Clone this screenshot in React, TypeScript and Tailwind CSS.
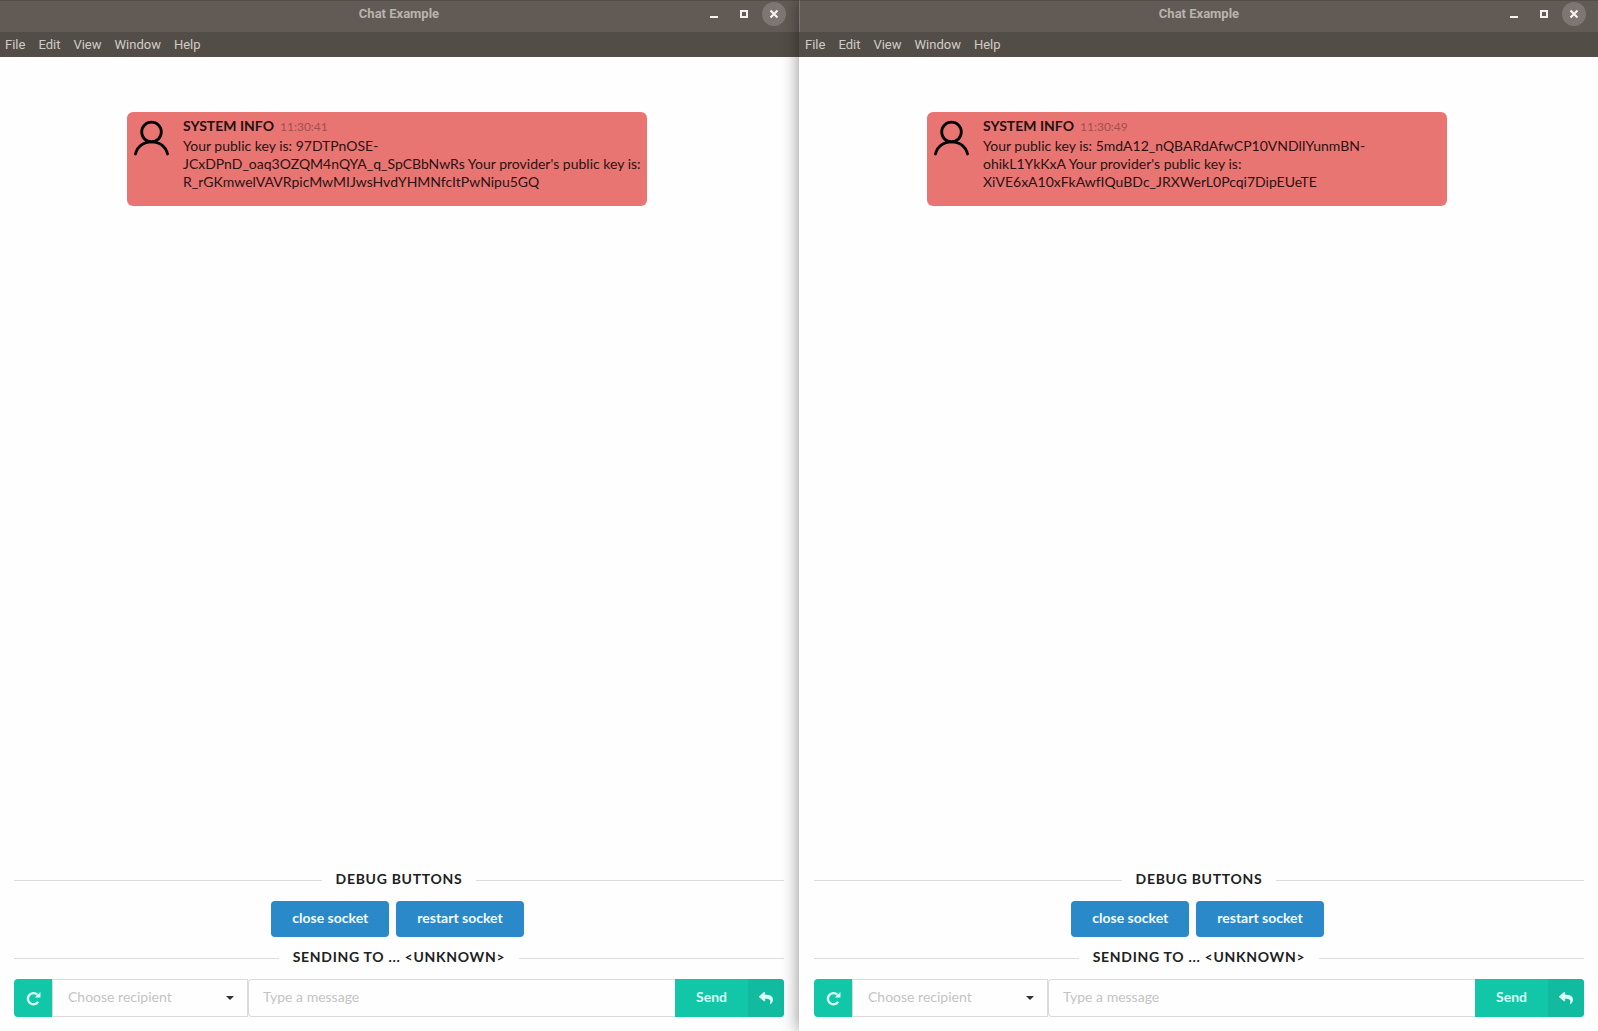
import { FaReply } from "react-icons/fa";

type Chat = { time: string; message: string };

const chats: Chat[] = [
  {
    time: "11:30:41",
    message:
      "Your public key is: 97DTPnOSE-JCxDPnD_oaq3OZQM4nQYA_q_SpCBbNwRs Your provider's public key is: R_rGKmwelVAVRpicMwMIJwsHvdYHMNfcItPwNipu5GQ",
  },
  {
    time: "11:30:49",
    message:
      "Your public key is: 5mdA12_nQBARdAfwCP10VNDlIYunmBN-ohikL1YkKxA Your provider's public key is: XiVE6xA10xFkAwfIQuBDc_JRXWerL0Pcqi7DipEUeTE",
  },
];

const menus = ["File", "Edit", "View", "Window", "Help"];

function TitleBar({ edge }: { edge: string }) {
  return (
    <header
      className={`grid h-8 grid-cols-[1fr_auto_1fr] items-start border-t border-t-[#534d47] bg-[#625a55] font-[Roboto,sans-serif] ${edge}`}
    >
      <span />
      <h1 className="pt-1 text-[13px] leading-[18px] font-bold text-[#b8b3ae]">Chat Example</h1>
      <div className="flex items-center justify-end gap-[6px] pt-px pr-3">
        <button type="button" aria-label="Minimize" className="flex size-6 items-center justify-center">
          <svg viewBox="0 0 24 24" className="size-6" fill="#f4f2f0">
            <path d="M8 14h8v2H8z" />
          </svg>
        </button>
        <button type="button" aria-label="Maximize" className="flex size-6 items-center justify-center">
          <svg viewBox="0 0 24 24" className="size-6" fill="none" stroke="#f4f2f0" strokeWidth="2">
            <path d="M9 9h6v6H9z" />
          </svg>
        </button>
        <button
          type="button"
          aria-label="Close"
          className="flex size-6 items-center justify-center rounded-full bg-[#7d7672]"
        >
          <svg viewBox="0 0 24 24" className="size-6" fill="none" stroke="#f4f2f0" strokeWidth="2.2">
            <path d="M8.5 8.5l7 7M15.5 8.5l-7 7" />
          </svg>
        </button>
      </div>
    </header>
  );
}

function Divider({ children }: { children: string }) {
  return (
    <h2 className="flex items-center gap-[14px] text-[14px] leading-5 font-bold tracking-wider text-[#212121] uppercase before:mt-[2px] before:h-px before:flex-1 before:bg-[#dcdcdc] after:mt-[2px] after:h-px after:flex-1 after:bg-[#dcdcdc]">
      {children}
    </h2>
  );
}

function ChatWindow({ chat, right }: { chat: Chat; right: boolean }) {
  return (
    <section
      className={
        right
          ? "relative z-10 flex flex-col bg-[#fefefe] shadow-[0_0_16px_rgba(0,0,0,0.45)]"
          : "flex flex-col bg-[#fefefe]"
      }
    >
      <TitleBar edge={right ? "border-l border-l-[#7d7570]" : "pr-px"} />
      <nav
        className={`flex h-[25px] items-center gap-[13px] bg-[#534d47] pr-1 font-[Roboto,sans-serif] text-[13px] leading-5 text-[#cfccc8] ${right ? "pl-[6px]" : "pl-[5px]"}`}
      >
        {menus.map((m) => (
          <button key={m} type="button">
            {m}
          </button>
        ))}
      </nav>
      <main className={`flex flex-1 flex-col pb-[14px] ${right ? "pr-[14px] pl-[15px]" : "pr-[15px] pl-[14px]"}`}>
        <article className="mt-[55px] ml-[113px] flex h-[94px] w-[520px] max-w-full gap-[14px] rounded-md bg-[#e97573] pt-[5px] pl-[7px]">
          <svg
            viewBox="0 0 35 36"
            className="mt-[3px] h-9 w-[35px] shrink-0"
            fill="none"
            stroke="#000"
            strokeWidth="2.8"
            strokeLinecap="round"
          >
            <circle cx="17.5" cy="12" r="9.8" />
            <path d="M1.5 34C3 26.5 9.500 21.800 17.500 21.800S32 26.5 33.500 34" />
          </svg>
          <div className="min-w-0 flex-1">
            <div className="flex items-baseline gap-[6px] leading-[18px]">
              <h3 className="text-[14px] font-bold text-[#241010]">SYSTEM INFO</h3>
              <time className="text-[12px] text-[#a44f4f]">{chat.time}</time>
            </div>
            <p className="mt-px text-[14px] leading-[18px] text-[#2a1212]">{chat.message}</p>
          </div>
        </article>
        <div className="mt-auto">
          <Divider>Debug buttons</Divider>
          <div className="mt-3 flex justify-center gap-[7px] pr-[3px]">
            <button
              type="button"
              className="h-9 rounded bg-[#2a89c9] px-[21px] pb-1 text-[14px] font-bold text-[#f0fbff]"
            >
              close socket
            </button>
            <button
              type="button"
              className="h-9 rounded bg-[#2a89c9] px-[21px] pb-1 text-[14px] font-bold text-[#f0fbff]"
            >
              restart socket
            </button>
          </div>
          <div className="mt-[10px]">
            <Divider>{"Sending to ... <unknown>"}</Divider>
          </div>
          <form className="mt-3 flex h-[38px]" onSubmit={(e) => e.preventDefault()}>
            <button
              type="button"
              aria-label="Refresh recipients"
              className="flex w-[38px] items-center justify-center rounded-l bg-[#12c6a8] pt-px text-[#dcfff8]"
            >
              <svg viewBox="0 0 14 14" className="size-[15px]" fill="none">
                <path d="M11.300 10.100A5.200 5.200 0 1 1 10.600 3.400" stroke="currentColor" strokeWidth="2.200" />
                <path d="M13.500 0.800V6H8.300z" fill="currentColor" />
              </svg>
            </button>
            <div className="relative w-[196px]">
              <select
                aria-label="Recipient"
                defaultValue=""
                className="h-full w-full appearance-none border border-[#dadada] bg-transparent pb-1 pl-[15px] text-[14px] text-[#c4c4c4]"
              >
                <option value="">Choose recipient</option>
              </select>
              <svg viewBox="0 0 8 4" className="pointer-events-none absolute top-[17px] right-[14px] h-1 w-2" fill="#333">
                <path d="M0 0h8L4 4z" />
              </svg>
            </div>
            <input
              aria-label="Message"
              type="text"
              placeholder="Type a message"
              className="min-w-0 flex-1 rounded-l border border-r-0 border-[#dadada] bg-transparent px-[14px] pb-1 text-[14px] placeholder:text-[#c4c4c4]"
            />
            <button type="submit" className="flex rounded-r bg-[#12c6a8] text-[14px] font-bold text-[#dcfff8]">
              <span className="flex h-full w-[73px] items-center justify-center pb-1">Send</span>
              <span className="flex h-full w-9 items-center justify-center rounded-r bg-[#11bb9f]">
                <FaReply className="size-[14px]" />
              </span>
            </button>
          </form>
        </div>
      </main>
    </section>
  );
}

export default function App() {
  return (
    <div className="grid min-h-screen grid-cols-2 overflow-hidden font-['Lato',sans-serif]">
      {chats.map((chat, i) => (
        <ChatWindow key={chat.time} chat={chat} right={i === 1} />
      ))}
    </div>
  );
}
